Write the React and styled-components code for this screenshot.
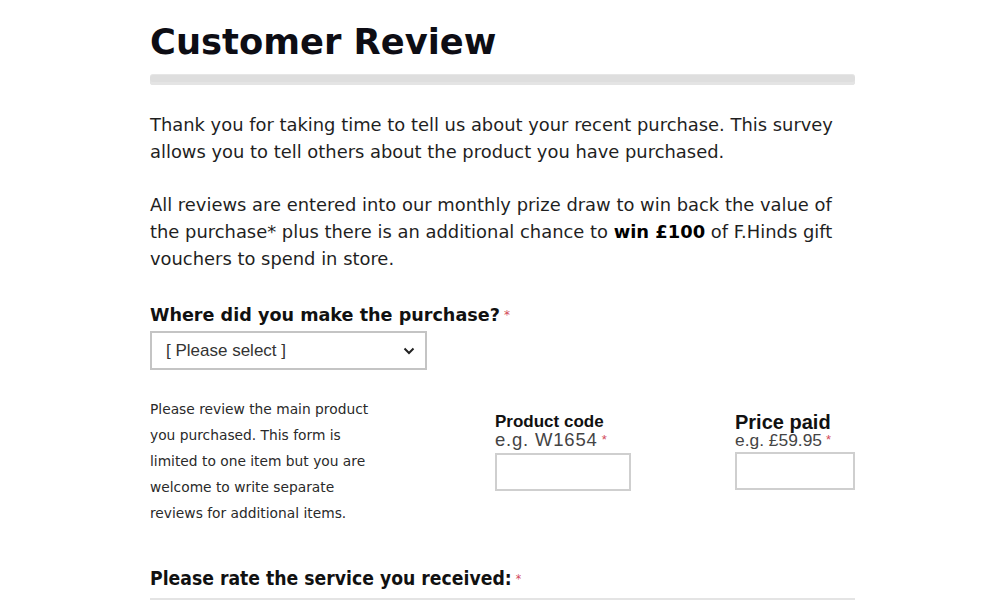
import React from 'react';
import styled, { createGlobalStyle } from 'styled-components';

const GlobalStyle = createGlobalStyle`
  html, body {
    margin: 0;
    padding: 0;
    background: #ffffff;
  }
  body {
    font-family: "DejaVu Sans", Verdana, sans-serif;
    color: #1a1a1a;
  }
`;

const Page = styled.div`
  width: 1000px;
  height: 600px;
  overflow: hidden;
  background: #fff;
`;

const Column = styled.div`
  width: 705px;
  margin-left: 150px;
  padding-top: 22px;
`;

const Title = styled.h1`
  margin: 0;
  font-family: "DejaVu Sans", Verdana, sans-serif;
  font-size: 35.3px;
  font-weight: 700;
  color: #0d0d14;
  line-height: 40px;
`;

const Rule = styled.div`
  height: 10px;
  margin-top: 12px;
  border-radius: 3px;
  background: #dedede;
  border-top: 1px solid #e6e6e6;
  box-shadow: inset 0 -3px 0 #e4e4e4;
`;

const Intro = styled.p`
  margin: 26px 0 0;
  font-family: "DejaVu Sans", Tahoma, sans-serif;
  font-size: 17.9px;
  line-height: 27px;
  color: #1f1f1f;
  white-space: nowrap;
  & + & {
    margin-top: 26px;
  }
  b {
    font-weight: 700;
    color: #000;
  }
`;

const Question = styled.label`
  display: block;
  margin-top: 32px;
  font-family: "DejaVu Sans", Verdana, sans-serif;
  font-size: 17.6px;
  font-weight: 700;
  line-height: 22px;
  color: #111;
`;

const Required = styled.span`
  color: #d24a5a;
  font-weight: 400;
  font-size: ${(p) => p.size || '12px'};
  vertical-align: top;
  margin-left: 4px;
`;

const SelectBox = styled.div`
  position: relative;
  width: 277px;
  height: 39px;
  margin-top: 5px;
  box-sizing: border-box;
  border: 2px solid #c4c4c4;
  display: flex;
  align-items: center;
  padding-left: 14px;
  font-family: "Liberation Sans", Arial, sans-serif;
  font-size: 17px;
  color: #333;
`;

const Chevron = styled.svg`
  position: absolute;
  right: 10px;
  top: 14px;
`;

const ProductRow = styled.div`
  display: grid;
  grid-template-columns: 345px 240px 120px;
  margin-top: 26px;
`;

const Note = styled.p`
  margin: 0;
  font-family: "DejaVu Sans", Verdana, sans-serif;
  font-size: 13.8px;
  line-height: 26px;
  color: #2a2a2a;
  white-space: nowrap;
`;

const Field = styled.div`
  display: flex;
  flex-direction: column;
  padding-top: 17px;
`;

const FieldLabel = styled.div`
  font-family: "Liberation Sans", Arial, sans-serif;
  font-size: ${(p) => p.size || '17px'};
  font-weight: 700;
  line-height: 18px;
  color: #111;
`;

const FieldHint = styled.div`
  font-family: "Liberation Sans", Arial, sans-serif;
  font-size: ${(p) => p.size || '18px'};
  letter-spacing: ${(p) => p.spacing || '0'};
  line-height: 18px;
  color: #444;
  white-space: nowrap;
`;

const TextBox = styled.div`
  width: ${(p) => p.w};
  height: 38px;
  box-sizing: border-box;
  border: 2px solid #cfcfcf;
  margin-top: ${(p) => p.gap || '4px'};
`;

const RateHeading = styled.div`
  margin-top: 42px;
  padding-bottom: 8px;
  border-bottom: 2px solid #e4e4e4;
  font-family: "DejaVu Sans Condensed", "DejaVu Sans", Tahoma, sans-serif;
  font-size: 19.2px;
  font-weight: 700;
  line-height: 22px;
  color: #111;
`;

export default function App() {
  return (
    <Page>
      <GlobalStyle />
      <Column>
        <Title>Customer Review</Title>
        <Rule />
        <Intro>
          Thank you for taking time to tell us about your recent purchase. This survey
          <br />
          allows you to tell others about the product you have purchased.
        </Intro>
        <Intro>
          All reviews are entered into our monthly prize draw to win back the value of
          <br />
          the purchase* plus there is an additional chance to <b>win £100</b> of F.Hinds gift
          <br />
          vouchers to spend in store.
        </Intro>
        <Question>
          Where did you make the purchase?<Required>*</Required>
        </Question>
        <SelectBox>
          [ Please select ]
          <Chevron width="12" height="8" viewBox="0 0 12 8">
            <path d="M1.5 1.5 L6 6 L10.5 1.5" fill="none" stroke="#222" strokeWidth="2" />
          </Chevron>
        </SelectBox>
        <ProductRow>
          <Note>
            Please review the main product
            <br />
            you purchased. This form is
            <br />
            limited to one item but you are
            <br />
            welcome to write separate
            <br />
            reviews for additional items.
          </Note>
          <Field>
            <FieldLabel>Product code</FieldLabel>
            <FieldHint size="18.5px" spacing="0.8px">
              e.g. W1654<Required size="13px">*</Required>
            </FieldHint>
            <TextBox w="136px" />
          </Field>
          <Field>
            <FieldLabel size="20px">Price paid</FieldLabel>
            <FieldHint size="17.4px">
              e.g. £59.95<Required size="13px">*</Required>
            </FieldHint>
            <TextBox w="120px" gap="3px" />
          </Field>
        </ProductRow>
        <RateHeading>
          Please rate the service you received:<Required>*</Required>
        </RateHeading>
      </Column>
    </Page>
  );
}
